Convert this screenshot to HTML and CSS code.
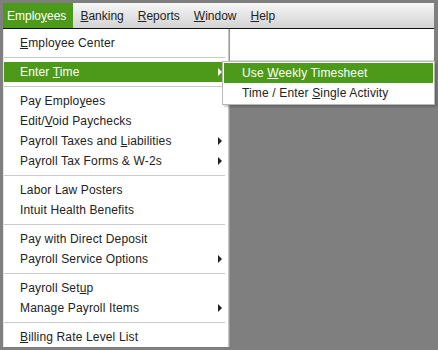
FILE: index.html
```html
<!DOCTYPE html>
<html>
<head>
<meta charset="utf-8">
<link rel="stylesheet" href="styles.css">
</head>
<body>
<div class="window">
  <div class="menubar">
    <div class="mb-item active">Emplo<u>y</u>ees</div>
    <div class="mb-item"><u>B</u>anking</div>
    <div class="mb-item"><u>R</u>eports</div>
    <div class="mb-item"><u>W</u>indow</div>
    <div class="mb-item"><u>H</u>elp</div>
  </div>
  <div class="content">
    <div class="strip"></div>
    <div class="menu">
      <div class="item"><span><u>E</u>mployee Center</span></div>
      <div class="sep"></div>
      <div class="item hl"><span>Enter <u>T</u>ime</span><span class="arrow"></span></div>
      <div class="sep"></div>
      <div class="item"><span>Pay Emplo<u>y</u>ees</span></div>
      <div class="item"><span>Edit/<u>V</u>oid Paychecks</span></div>
      <div class="item"><span>Payroll Taxes and <u>L</u>iabilities</span><span class="arrow"></span></div>
      <div class="item"><span>Payroll Tax Forms &amp; W-2s</span><span class="arrow"></span></div>
      <div class="sep"></div>
      <div class="item"><span>Labor Law Posters</span></div>
      <div class="item"><span>Intuit Health Benefits</span></div>
      <div class="sep"></div>
      <div class="item"><span>Pay with Direct Deposit</span></div>
      <div class="item"><span>Payroll Service Options</span><span class="arrow"></span></div>
      <div class="sep"></div>
      <div class="item"><span>Payroll Set<u>u</u>p</span></div>
      <div class="item"><span>Manage Payroll Items</span><span class="arrow"></span></div>
      <div class="sep"></div>
      <div class="item"><span><u>B</u>illing Rate Level List</span></div>
    </div>
    <div class="submenu">
      <div class="item sub hl"><span>Use <u>W</u>eekly Timesheet</span></div>
      <div class="item sub"><span>Time / Enter <u>S</u>ingle Activity</span></div>
    </div>
  </div>
</div>
</body>
</html>
```

FILE: styles.css
```css
* { box-sizing: border-box; }
html, body { margin: 0; padding: 0; }
body {
  background: #7f7f7f;
  font-family: "Liberation Sans", Arial, sans-serif;
  font-size: 12px;
  color: #222;
}
u { text-decoration: underline; text-underline-offset: 1px; }
.window {
  width: 438px;
  height: 350px;
  background: #7f7f7f;
  padding: 3px 4px 0 3px;
  display: flex;
  flex-direction: column;
  overflow: hidden;
}
.menubar {
  height: 26px;
  flex: none;
  display: flex;
  align-items: stretch;
  background: linear-gradient(#f6f6f6, #d3d3d3);
  border-bottom: 1px solid #111;
}
.mb-item {
  display: flex;
  align-items: center;
  padding: 0 7px;
  color: #222;
}
.mb-item.active {
  padding: 0 7px 0 4px;
  background: #4d9a1b;
  color: #fff;
}
.content {
  position: relative;
  flex: 1;
}
.strip {
  height: 32px;
  background: #fff;
  border-bottom: 1px solid #dcdcdc;
}
.menu {
  position: absolute;
  left: 0;
  top: 0;
  width: 226px;
  height: 318px;
  background: #fff;
  border-left: 1px solid #e6e6e6;
  border-right: 1px solid #c4c4c4;
  box-shadow: 1px 0 0 #9a9a9a;
  padding-top: 4px;
}
.item {
  height: 20px;
  display: flex;
  align-items: center;
  padding: 0 6px 0 16px;
  white-space: nowrap;
  letter-spacing: 0.15px;
}
.item.hl {
  background: #4d9a1b;
  color: #fff;
}
.arrow {
  margin-left: auto;
  width: 0;
  height: 0;
  border-top: 4px solid transparent;
  border-bottom: 4px solid transparent;
  border-left: 4px solid #222;
}
.item.hl .arrow { border-left-color: #fff; }
.sep {
  height: 1px;
  background: #cacaca;
  margin: 4px 3px 4px 0;
}
.submenu {
  position: absolute;
  left: 219px;
  top: 32px;
  width: 213px;
  background: #fff;
  border: 1px solid #b8b8b8;
  padding: 1px;
  box-shadow: 2px 2px 2px rgba(0,0,0,0.2);
}
.item.sub {
  padding-left: 18px;
}
```
